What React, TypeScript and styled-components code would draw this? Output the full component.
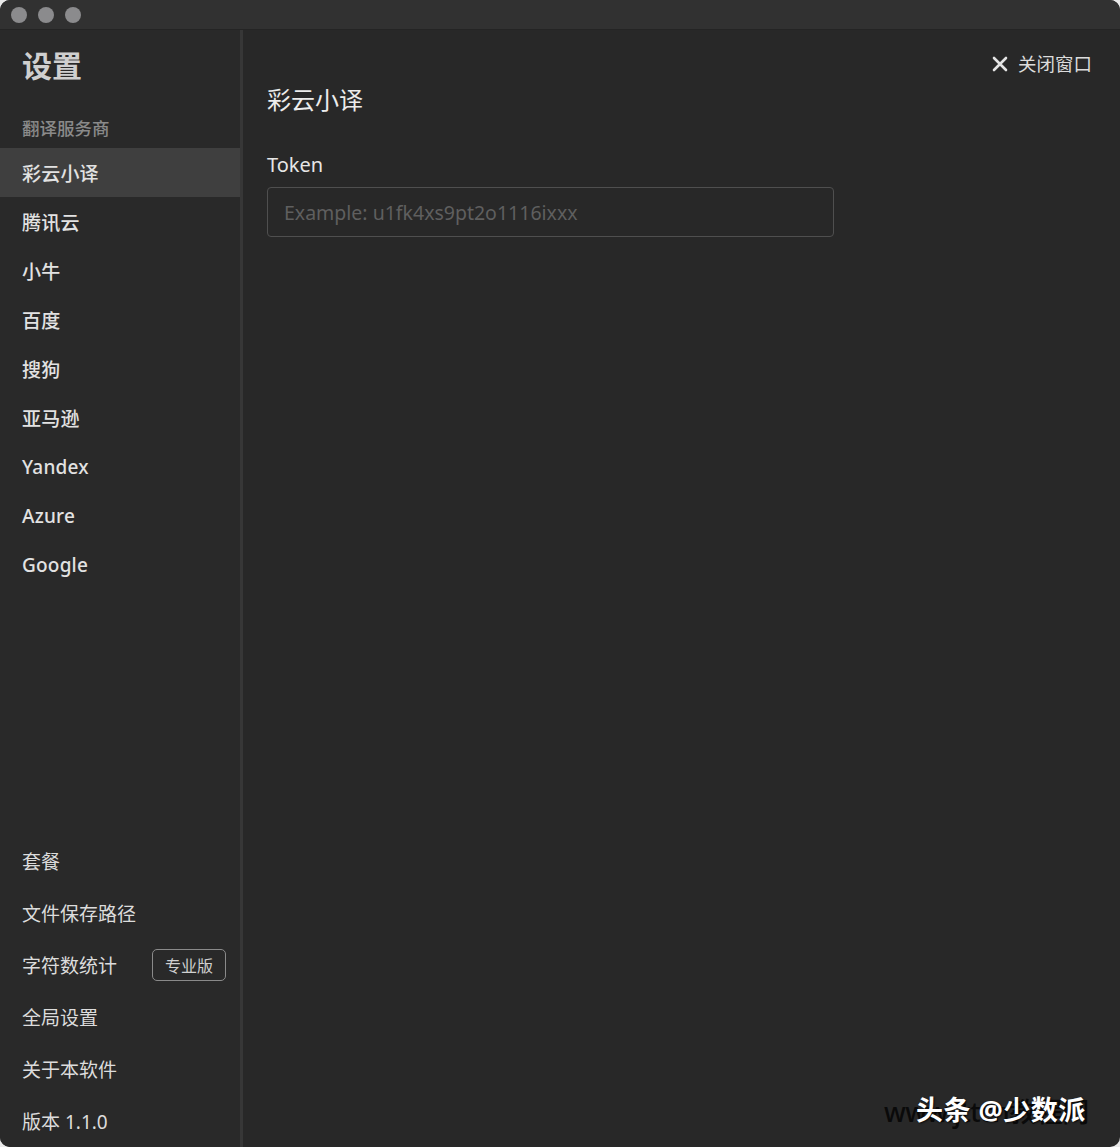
import React, { useState } from 'react';
import styled, { createGlobalStyle } from 'styled-components';

const GlobalStyle = createGlobalStyle`
  html, body {
    margin: 0;
    padding: 0;
    background: #e9e9e9;
  }
  * {
    box-sizing: border-box;
  }
`;

const FONT = `"Noto Sans", "Noto Sans CJK SC", sans-serif`;

const Window = styled.div`
  position: relative;
  width: 1120px;
  height: 1147px;
  border-radius: 10px;
  overflow: hidden;
  background: #282828;
  font-family: ${FONT};
  display: flex;
  flex-direction: column;
`;

const TitleBar = styled.div`
  height: 30px;
  flex-shrink: 0;
  background: #313131;
  border-bottom: 1px solid #242424;
  display: flex;
  align-items: center;
  gap: 11px;
  padding-left: 11px;
`;

const Light = styled.span`
  width: 16px;
  height: 16px;
  border-radius: 50%;
  background: #8b8b8d;
`;

const Body = styled.div`
  flex: 1;
  display: flex;
  min-height: 0;
`;

const Sidebar = styled.nav`
  width: 243px;
  flex-shrink: 0;
  background: #292929;
  border-right: 3px solid #373737;
  display: flex;
  flex-direction: column;
`;

const SideTitle = styled.h1`
  margin: 16px 0 0;
  padding-left: 22px;
  font-size: 30px;
  line-height: 40px;
  font-weight: 700;
  color: #cfcfcf;
`;

const GroupLabel = styled.div`
  margin: 31px 0 9px;
  padding-left: 22px;
  font-size: 17.5px;
  line-height: 22px;
  color: #8a8a8a;
  font-weight: 500;
`;

const ProviderItem = styled.div<{ $active?: boolean }>`
  height: 49px;
  display: flex;
  align-items: center;
  padding-left: 22px;
  font-size: 19px;
  font-weight: 500;
  letter-spacing: 0.2px;
  color: #e2e2e2;
  background: ${(p) => (p.$active ? '#3f3f3f' : 'transparent')};
  cursor: pointer;
`;

const Spacer = styled.div`
  flex: 1;
`;

const BottomItem = styled.div`
  height: 52px;
  display: flex;
  align-items: center;
  justify-content: space-between;
  padding: 0 14px 0 22px;
  font-size: 19px;
  color: #dcdcdc;
`;

const ProBadge = styled.span`
  display: inline-flex;
  align-items: center;
  justify-content: center;
  width: 74px;
  height: 32px;
  border: 1.5px solid #8a8a8a;
  border-radius: 5px;
  font-size: 16px;
  color: #d0d0d0;
`;

const Main = styled.main`
  flex: 1;
  display: flex;
  flex-direction: column;
  padding: 0 28px 0 24px;
`;

const CloseRow = styled.div`
  margin-top: 22px;
  display: flex;
  justify-content: flex-end;
`;

const CloseButton = styled.button`
  display: flex;
  align-items: center;
  gap: 10px;
  background: none;
  border: none;
  padding: 0;
  font-family: ${FONT};
  font-size: 18.5px;
  line-height: 24px;
  color: #dcdcdc;
  cursor: pointer;
`;

const PageTitle = styled.h2`
  margin: 8px 0 0;
  font-size: 24px;
  line-height: 32px;
  font-weight: 400;
  color: #ececec;
`;

const FieldLabel = styled.label`
  margin-top: 36px;
  font-size: 20px;
  line-height: 26px;
  color: #e6e6e6;
`;

const TokenInput = styled.input`
  margin-top: 9px;
  width: 567px;
  height: 50px;
  background: transparent;
  border: 1.5px solid #4f4f4f;
  border-radius: 4px;
  padding: 0 16px;
  font-family: ${FONT};
  font-size: 19.5px;
  color: #e6e6e6;
  outline: none;
  &::placeholder {
    color: #5f5f5f;
  }
`;

const Watermark = styled.div`
  position: absolute;
  right: 8px;
  bottom: 20px;
  width: 228px;
  height: 38px;
  pointer-events: none;
`;

const WatermarkBack = styled.span`
  position: absolute;
  left: 0;
  top: 2px;
  font-family: ${FONT};
  font-size: 27px;
  font-weight: 500;
  color: #0a0a0a;
  letter-spacing: -0.5px;
  white-space: nowrap;
`;

const WatermarkFront = styled.span`
  position: absolute;
  left: 32px;
  top: 0;
  font-family: ${FONT};
  font-size: 27px;
  font-weight: 700;
  letter-spacing: 0.5px;
  color: #ffffff;
  text-shadow: 1px 1px 2px rgba(0, 0, 0, 0.7);
  white-space: nowrap;
`;

const providers = ['彩云小译', '腾讯云', '小牛', '百度', '搜狗', '亚马逊', 'Yandex', 'Azure', 'Google'];

const CloseIcon = () => (
  <svg width="16" height="16" viewBox="0 0 16 16">
    <path d="M2 2 L14 14 M14 2 L2 14" stroke="#e4e4e4" strokeWidth="2.6" strokeLinecap="round" />
  </svg>
);

const App: React.FC = () => {
  const [active, setActive] = useState('彩云小译');

  return (
    <>
      <GlobalStyle />
      <Window>
        <TitleBar>
          <Light />
          <Light />
          <Light />
        </TitleBar>
        <Body>
          <Sidebar>
            <SideTitle>设置</SideTitle>
            <GroupLabel>翻译服务商</GroupLabel>
            {providers.map((name) => (
              <ProviderItem key={name} $active={name === active} onClick={() => setActive(name)}>
                {name}
              </ProviderItem>
            ))}
            <Spacer />
            <BottomItem>套餐</BottomItem>
            <BottomItem>文件保存路径</BottomItem>
            <BottomItem>
              字符数统计
              <ProBadge>专业版</ProBadge>
            </BottomItem>
            <BottomItem>全局设置</BottomItem>
            <BottomItem>关于本软件</BottomItem>
            <BottomItem>版本 1.1.0</BottomItem>
          </Sidebar>
          <Main>
            <CloseRow>
              <CloseButton>
                <CloseIcon />
                关闭窗口
              </CloseButton>
            </CloseRow>
            <PageTitle>{active}</PageTitle>
            <FieldLabel>Token</FieldLabel>
            <TokenInput placeholder="Example: u1fk4xs9pt2o1116ixxx" />
          </Main>
        </Body>
        <Watermark>
          <WatermarkBack>www.jttcn教程网</WatermarkBack>
          <WatermarkFront>头条 @少数派</WatermarkFront>
        </Watermark>
      </Window>
    </>
  );
};

export default App;
